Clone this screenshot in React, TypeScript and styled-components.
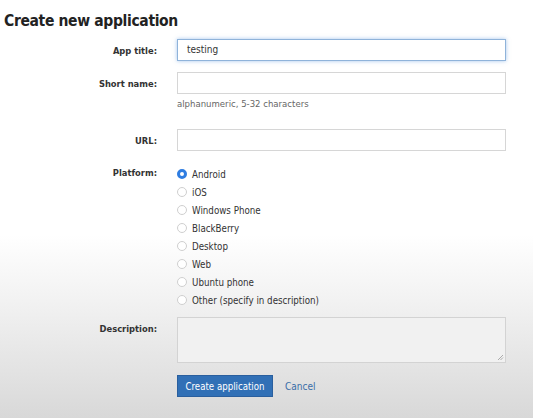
import React from "react";
import styled, { createGlobalStyle } from "styled-components";

const Global = createGlobalStyle`
  html, body { margin: 0; padding: 0; }
  body {
    width: 533px;
    height: 418px;
    overflow: hidden;
    font-family: "DejaVu Sans Condensed", "DejaVu Sans", Verdana, sans-serif;
    background: linear-gradient(to bottom, #ffffff 0px, #ffffff 235px, #f1f1f1 305px, #e2e2e2 375px, #d8d8d8 418px);
    color: #333;
  }
`;

const Page = styled.div`
  display: flex;
  flex-direction: column;
  width: 533px;
  height: 418px;
`;

const Title = styled.h1`
  margin: 0;
  padding: 12px 0 0 4px;
  font-family: "DejaVu Sans Condensed", "DejaVu Sans", sans-serif;
  font-size: 15.5px;
  font-weight: 700;
  line-height: 19px;
  letter-spacing: -0.35px;
  color: #222;
`;

const Row = styled.div<{ $mt: number }>`
  display: grid;
  grid-template-columns: 157px 329px;
  column-gap: 20px;
  align-items: start;
  margin-top: ${(p) => p.$mt}px;
`;

const Label = styled.label<{ $pt?: number }>`
  text-align: right;
  font-size: 9.3px;
  font-weight: 700;
  line-height: 14px;
  padding-top: ${(p) => p.$pt ?? 5}px;
  color: #333;
`;

const Field = styled.div`
  display: flex;
  flex-direction: column;
`;

const TextInput = styled.div<{ $focus?: boolean }>`
  box-sizing: border-box;
  height: 22px;
  border: 1px solid ${(p) => (p.$focus ? "#8fb3da" : "#d6d6d6")};
  box-shadow: ${(p) => (p.$focus ? "0 0 4px rgba(90,150,220,0.55)" : "none")};
  background: #fff;
  padding: 0 9px;
  font-size: 10px;
  line-height: 20px;
  color: #333;
`;

const Help = styled.div`
  margin-top: 3px;
  font-size: 9.5px;
  line-height: 14px;
  color: #666;
`;

const RadioList = styled.div`
  display: flex;
  flex-direction: column;
`;

const RadioItem = styled.div`
  display: flex;
  align-items: center;
  height: 18px;
  font-size: 9.7px;
  color: #333;
`;

const Circle = styled.span<{ $on?: boolean }>`
  box-sizing: border-box;
  width: 10px;
  height: 10px;
  margin-right: 5px;
  border-radius: 50%;
  border: ${(p) => (p.$on ? "3px solid #2f7de1" : "1px solid #cfcfcf")};
  background: #fff;
  flex: none;
`;

const TextArea = styled.div`
  position: relative;
  box-sizing: border-box;
  height: 46px;
  border: 1px solid #d3d3d3;
  background: #f1f1f1;
`;

const Grip = styled.svg`
  position: absolute;
  right: 1px;
  bottom: 1px;
`;

const Actions = styled.div`
  display: flex;
  align-items: center;
  gap: 12px;
`;

const Primary = styled.button`
  box-sizing: border-box;
  height: 22px;
  width: 96px;
  padding: 0;
  border: 1px solid #2a5f9e;
  background: #3170b6;
  color: #fff;
  font-family: "DejaVu Sans Condensed", "DejaVu Sans", sans-serif;
  font-size: 9.6px;
  font-weight: 400;
`;

const CancelLink = styled.a`
  font-size: 10px;
  color: #3a6ea8;
  text-decoration: none;
`;

const platforms = [
  "Android",
  "iOS",
  "Windows Phone",
  "BlackBerry",
  "Desktop",
  "Web",
  "Ubuntu phone",
  "Other (specify in description)",
];

export default function App() {
  return (
    <Page>
      <Global />
      <Title>Create new application</Title>
      <Row $mt={8}>
        <Label>App title:</Label>
        <Field>
          <TextInput $focus>testing</TextInput>
        </Field>
      </Row>
      <Row $mt={11}>
        <Label>Short name:</Label>
        <Field>
          <TextInput />
          <Help>alphanumeric, 5-32 characters</Help>
        </Field>
      </Row>
      <Row $mt={18}>
        <Label>URL:</Label>
        <Field>
          <TextInput />
        </Field>
      </Row>
      <Row $mt={14}>
        <Label $pt={1}>Platform:</Label>
        <RadioList>
          {platforms.map((p, i) => (
            <RadioItem key={p}>
              <Circle $on={i === 0} />
              {p}
            </RadioItem>
          ))}
        </RadioList>
      </Row>
      <Row $mt={8}>
        <Label>Description:</Label>
        <TextArea>
          <Grip width="7" height="7" viewBox="0 0 7 7">
            <path d="M6 1 L1 6 M6 3.5 L3.5 6" stroke="#999" strokeWidth="0.8" />
          </Grip>
        </TextArea>
      </Row>
      <Row $mt={12}>
        <span />
        <Actions>
          <Primary>Create application</Primary>
          <CancelLink href="#">Cancel</CancelLink>
        </Actions>
      </Row>
    </Page>
  );
}
